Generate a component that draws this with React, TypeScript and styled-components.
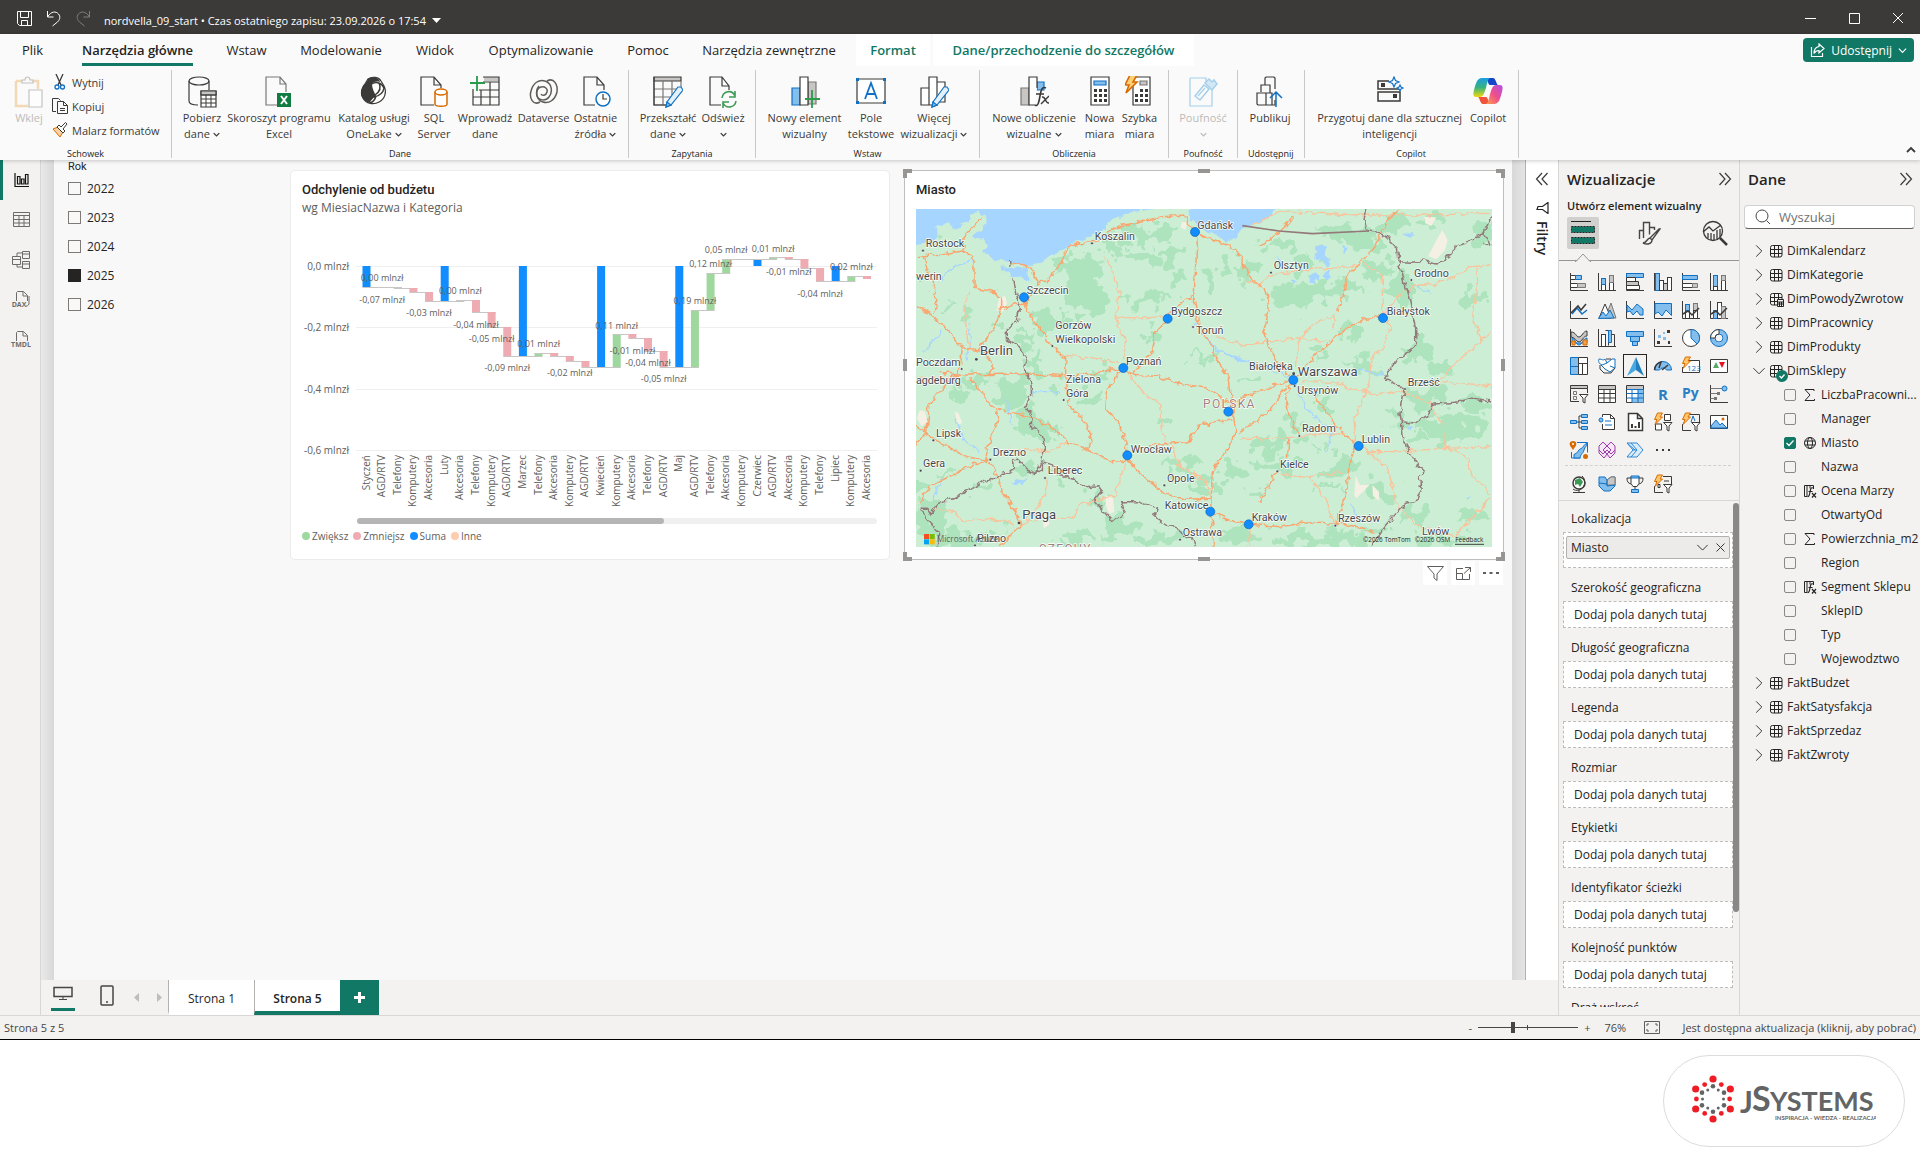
import React from "react";
import styled, { createGlobalStyle, css } from "styled-components";

/* ---------- theme values ---------- */
const ink = "#252423";
const dark = "#3b3a39";
const green = "#117865";
const blue = "#1071c4";
const sky = "#83beec";
const grey = "#c8c6c4";
const line = "#d9d7d5";
const pane = "#f3f2f1";
const orange = "#d86b00";

const Global = createGlobalStyle`
  *, *::before, *::after { box-sizing: border-box; }
  html, body { margin: 0; padding: 0; background: #fff; }
  body, button, input { font-family: "Open Sans", "Noto Sans", sans-serif; font-size: 12px; color: ${ink}; }
  button { background: none; border: 0; padding: 0; margin: 0; cursor: pointer; }
  svg { display: block; flex: none; }
`;

const Shell = styled.div`
  display: flex;
  flex-direction: column;
  height: 100vh;
  min-height: 720px;
  overflow: hidden;
`;

/* ---------- title bar ---------- */
const TitleBar = styled.header`
  display: flex;
  align-items: center;
  flex: none;
  height: 34px;
  padding: 2px 14px 0 16px;
  gap: 13px;
  background: #3b3a38;
  color: #fff;
`;
const TitleButton = styled.button<{ $dim?: boolean }>`
  display: flex;
  color: #fff;
  opacity: ${(p) => (p.$dim ? 0.35 : 1)};
`;
const FileName = styled.button`
  display: flex;
  align-items: center;
  gap: 6px;
  margin-right: auto;
  color: #fff;
  font-size: 11px;
  line-height: 16px;
  white-space: nowrap;
  padding-top: 5px;
`;
const WindowControls = styled.div`
  display: flex;
  gap: 28px;
`;

/* ---------- ribbon ---------- */
const Ribbon = styled.section`
  position: relative;
  z-index: 2;
  flex: none;
  background: #fafafa;
  box-shadow: 0 1px 4px rgba(0, 0, 0, 0.2);
`;
const TabRow = styled.nav`
  display: flex;
  align-items: stretch;
  height: 32px;
  padding-right: 6px;
`;
const RibbonTab = styled.button<{ $w: number; $active?: boolean; $context?: boolean }>`
  display: flex;
  align-items: center;
  justify-content: center;
  width: ${(p) => p.$w}px;
  font-size: 13px;
  white-space: nowrap;
  font-weight: ${(p) => (p.$active || p.$context ? 600 : 400)};
  color: ${(p) => (p.$context ? green : ink)};
  background: ${(p) => (p.$context ? "#fff" : "transparent")};
  margin-left: ${(p) => (p.$context ? 3 : 0)}px;
  & > span {
    display: flex;
    align-items: center;
    height: 31px;
    border-bottom: 3px solid ${(p) => (p.$active ? green : "transparent")};
    border-top: 3px solid transparent;
  }
`;
const ShareButton = styled.button`
  display: flex;
  align-items: center;
  gap: 6px;
  margin: 4px 0 4px auto;
  height: 24px;
  padding: 0 7px;
  border-radius: 4px;
  background: ${green};
  color: #fff;
  font-size: 12px;
`;
const Groups = styled.div`
  display: flex;
  height: 94px;
  padding-top: 4px;
`;
const Group = styled.section`
  display: flex;
  flex-direction: column;
  height: 88px;
  padding: 0 10px;
  border-right: 1px solid #c8c8c8;
`;
const GroupItems = styled.div`
  display: flex;
  flex: 1;
  gap: 4px;
  padding-top: 6px;
`;
const GroupLabel = styled.h2`
  margin: 0;
  font-size: 9px;
  font-weight: 400;
  line-height: 9px;
  text-align: center;
  white-space: nowrap;
  display: flex;
  justify-content: center;
`;
const BigButton = styled.button<{ $w: number; $off?: boolean }>`
  display: flex;
  flex-direction: column;
  align-items: center;
  width: ${(p) => p.$w}px;
  font-size: 11px;
  line-height: 16px;
  color: ${(p) => (p.$off ? "#bdbbb9" : dark)};
  & > svg { margin-bottom: 2px; }
`;
const ButtonLine = styled.span`
  display: flex;
  align-items: center;
  justify-content: center;
  gap: 3px;
  min-height: 16px;
  white-space: nowrap;
`;
const SmallButtons = styled.div`
  display: flex;
  flex-direction: column;
  gap: 2px;
  margin-top: -5px;
`;
const SmallButton = styled.button`
  display: flex;
  align-items: center;
  gap: 4px;
  height: 22px;
  width: 109px;
  font-size: 11px;
  white-space: nowrap;
  color: ${dark};
`;
const CollapseButton = styled.button`
  align-self: flex-end;
  margin: 0 4px 5px auto;
`;

/* ---------- main area ---------- */
const Main = styled.div`
  display: flex;
  flex: 1;
  min-height: 0;
`;
const Rail = styled.nav`
  display: flex;
  flex-direction: column;
  flex: none;
  width: 41px;
  background: ${pane};
  border-right: 1px solid ${line};
`;
const RailButton = styled.button<{ $active?: boolean }>`
  display: flex;
  align-items: center;
  justify-content: center;
  height: 40px;
  padding-right: 2px;
  border-left: 3px solid ${(p) => (p.$active ? green : "transparent")};
`;
const Center = styled.div`
  display: flex;
  flex-direction: column;
  flex: 1;
  min-width: 0;
`;
const CenterTop = styled.div`
  display: flex;
  flex: 1;
  min-height: 0;
`;
const Canvas = styled.main`
  flex: 1;
  min-width: 0;
  padding: 0 13px;
  background: linear-gradient(90deg, #e9e9e9, #d8d8d8 13px, #d8d8d8 calc(100% - 13px), #e4e4e4);
  border-right: 1px solid #b3b0ad;
`;
const Page = styled.div`
  display: grid;
  grid-template-columns: 208px minmax(0, 1fr) minmax(0, 1fr);
  column-gap: 14px;
  align-items: start;
  height: 100%;
  padding: 0 8px 0 14px;
  background: #f8f8f8;
  overflow: hidden;
`;
const Slicer = styled.fieldset`
  display: flex;
  flex-direction: column;
  border: 0;
  margin: 0;
  padding: 0;
`;
const SlicerTitle = styled.legend`
  padding: 0;
  font-family: Roboto, sans-serif;
  font-size: 11px;
  line-height: 14px;
`;
const SlicerItem = styled.label`
  display: flex;
  align-items: center;
  gap: 6px;
  height: 29px;
  font-size: 12px;
`;
const SlicerBox = styled.input`
  appearance: none;
  width: 13px;
  height: 13px;
  margin: 0;
  border: 1px solid #7d7a78;
  &:checked { background: ${ink}; border-color: ${ink}; }
`;
const Card = styled.article<{ $selected?: boolean }>`
  position: relative;
  height: 390px;
  margin-top: 10px;
  padding: 11px;
  background: #fff;
  border: 1px solid ${(p) => (p.$selected ? "#c0bebc" : "#ececec")};
  border-radius: ${(p) => (p.$selected ? 0 : 5)}px;
`;
const CardTitle = styled.h3`
  margin: 0;
  font-family: Roboto, sans-serif;
  font-size: 13px;
  font-weight: 500;
  line-height: 15px;
`;
const CardSub = styled.p`
  margin: 0;
  font-size: 12px;
  line-height: 22px;
  color: #605e5c;
`;
const ChartSvg = styled.svg`
  width: 100%;
  height: auto;
  font-family: "Open Sans", "Noto Sans", sans-serif;
`;
const ScrollTrack = styled.div`
  height: 6px;
  margin: 0 1px 5px 55px;
  border-radius: 3px;
  background: #f0f0f0;
`;
const ScrollThumb = styled.div`
  width: 59%;
  height: 6px;
  border-radius: 3px;
  background: #b5b5b5;
`;
const Legend = styled.ul`
  display: flex;
  gap: 5px;
  margin: 0;
  padding: 0;
  list-style: none;
  font-size: 10px;
  line-height: 14px;
  color: #605e5c;
`;
const LegendItem = styled.li<{ $color: string }>`
  display: flex;
  align-items: center;
  gap: 2px;
  &::before {
    content: "";
    width: 8px;
    height: 8px;
    border-radius: 50%;
    background: ${(p) => p.$color};
  }
`;
const MapSvg = styled.svg`
  width: 100%;
  height: auto;
  margin-top: 12px;
  font-family: Roboto, sans-serif;
`;
const Handle = styled.i<{ $v: "top" | "mid" | "bottom"; $h: "left" | "mid" | "right" }>`
  position: absolute;
  ${(p) => {
    const corner = p.$v !== "mid" && p.$h !== "mid";
    const w = corner ? 9 : p.$h === "mid" ? 12 : 4;
    const h = corner ? 9 : p.$v === "mid" ? 12 : 4;
    return css`
      width: ${w}px;
      height: ${h}px;
      ${p.$v === "top" ? "top: -2px;" : p.$v === "bottom" ? "bottom: -2px;" : "top: calc(50% - 6px);"}
      ${p.$h === "left" ? "left: -2px;" : p.$h === "right" ? "right: -2px;" : "left: calc(50% - 6px);"}
      ${corner
        ? `border-${p.$v}: 4px solid #979593; border-${p.$h}: 4px solid #979593;`
        : "background: #979593;"}
    `;
  }}
`;
const VisualTools = styled.div`
  position: absolute;
  top: 390px;
  right: 0;
  display: flex;
  gap: 4px;
`;
const ToolButton = styled.button`
  display: flex;
  align-items: center;
  justify-content: center;
  width: 24px;
  height: 24px;
  background: #fff;
`;

/* ---------- filters strip ---------- */
const Filters = styled.aside`
  display: flex;
  flex-direction: column;
  align-items: center;
  width: 32px;
  padding-top: 12px;
  background: #fff;
`;
const FilterLabel = styled.button`
  display: flex;
  align-items: center;
  gap: 7px;
  margin-top: 16px;
  writing-mode: vertical-rl;
  font-size: 14px;
  font-weight: 600;
  line-height: 20px;
`;

/* ---------- page tabs ---------- */
const PageBar = styled.div`
  display: flex;
  align-items: stretch;
  flex: none;
  height: 35px;
  background: ${pane};
`;
const ViewButton = styled.button<{ $active?: boolean }>`
  display: flex;
  flex-direction: column;
  align-items: center;
  justify-content: space-between;
  width: 24px;
  margin: 5px 10px 4px 10px;
  border-bottom: 3px solid ${(p) => (p.$active ? green : "transparent")};
`;
const PageArrows = styled.div`
  display: flex;
  align-items: center;
  gap: 16px;
  margin: 0 6px 0 5px;
`;
const PageTab = styled.button<{ $active?: boolean }>`
  width: 86px;
  padding-top: 5px;
  background: #fff;
  font-weight: ${(p) => (p.$active ? 600 : 400)};
  border-left: 1px solid #b3b0ad;
  border-bottom: 4px solid ${(p) => (p.$active ? green : "#fff")};
`;
const AddPage = styled.button`
  display: flex;
  align-items: center;
  justify-content: center;
  width: 39px;
  background: ${green};
`;

/* ---------- side panes ---------- */
const Pane = styled.aside<{ $w: number }>`
  display: flex;
  flex-direction: column;
  flex: none;
  width: ${(p) => p.$w}px;
  min-height: 0;
  background: ${pane};
  border-left: 1px solid ${line};
`;
const PaneHead = styled.div`
  display: flex;
  align-items: center;
  justify-content: space-between;
  height: 36px;
  padding: 1px 7px 0 8px;
`;
const PaneTitle = styled.h2`
  margin: 0;
  font-size: 15px;
  font-weight: 600;
`;
const SubTitle = styled.h3`
  margin: 0;
  padding: 0 8px;
  font-size: 11px;
  font-weight: 600;
  line-height: 20px;
`;
const ModeRow = styled.div`
  display: flex;
  justify-content: space-between;
  height: 45px;
  padding: 1px 8px 0;
  border-bottom: 1px solid #979593;
`;
const ModeButton = styled.button<{ $active?: boolean }>`
  position: relative;
  display: flex;
  align-items: center;
  justify-content: center;
  width: 32px;
  height: 32px;
  border-radius: 2px;
  background: ${(p) => (p.$active ? "#d2d0ce" : "transparent")};
`;
const Caret = styled.svg`
  position: absolute;
  top: 36px;
  left: 8px;
`;
const VisualGrid = styled.div<{ $top: number }>`
  display: grid;
  grid-template-columns: repeat(6, 28px);
  grid-auto-rows: 28px;
  padding: ${(p) => p.$top}px 0 1px 6px;
`;
const VisualButton = styled.button<{ $active?: boolean }>`
  display: flex;
  align-items: center;
  justify-content: center;
  margin: 2px;
  border: 1px solid ${(p) => (p.$active ? ink : "transparent")};
`;
const Dashed = styled.hr`
  width: calc(100% - 14px);
  margin: 0 6px;
  border: 0;
  border-top: 1px dashed #d2d0ce;
`;
const Divider = styled.div`
  flex: none;
  height: 1px;
  margin-top: 1px;
  background: ${line};
`;
const WellScroll = styled.div`
  display: flex;
  flex: 1;
  min-height: 0;
  margin-bottom: 8px;
  overflow: hidden;
`;
const WellList = styled.div`
  flex: 1;
  min-width: 0;
  padding: 8px 0 0 4px;
`;
const WellBar = styled.div`
  width: 6px;
  height: calc(100% - 97px);
  margin-top: 2px;
  border-radius: 3px;
  background: #8a8886;
`;
const Well = styled.section`
  margin-bottom: 10px;
`;
const WellLabel = styled.h4`
  margin: 0 0 3px;
  padding-left: 8px;
  font-size: 12px;
  font-weight: 400;
  line-height: 20px;
`;
const WellBox = styled.div<{ $filled?: boolean }>`
  height: ${(p) => (p.$filled ? 36 : 27)}px;
  padding: ${(p) => (p.$filled ? "3px 2px" : "0 10px")};
  border: 1px dashed #bebbb8;
  background: #fff;
  line-height: 26px;
`;
const FieldPill = styled.div`
  display: flex;
  align-items: center;
  gap: 7px;
  height: 23px;
  padding: 0 4px;
  border: 1px solid #b3b0ad;
  border-radius: 2px;
  background: #edebe9;
  line-height: 20px;
  & > span { flex: 1; }
`;
const SearchBox = styled.label`
  display: flex;
  align-items: center;
  gap: 8px;
  height: 24px;
  margin: 9px 5px 10px 4px;
  padding: 0 10px;
  background: #fff;
  border: 1px solid #d1d1d1;
  border-bottom-color: #616161;
  border-radius: 4px;
`;
const SearchInput = styled.input`
  width: 100%;
  min-width: 0;
  border: 0;
  padding: 0;
  outline: 0;
  background: none;
  font-size: 13px;
  &::placeholder { color: #707070; opacity: 1; }
`;
const Tree = styled.ul`
  margin: 0;
  padding: 0;
  list-style: none;
`;
const TableRow = styled.button`
  display: flex;
  align-items: center;
  gap: 4px;
  width: 100%;
  height: 24px;
  padding-left: 12px;
  line-height: 24px;
`;
const FieldRow = styled.label`
  display: flex;
  align-items: center;
  height: 24px;
  padding-left: 44px;
  line-height: 24px;
  white-space: nowrap;
`;
const FieldCheck = styled.input`
  appearance: none;
  width: 12px;
  height: 12px;
  margin: 0 7px 0 0;
  border: 1px solid #8a8886;
  border-radius: 2px;
  flex: none;
  &:checked {
    border-color: ${green};
    background: ${green};
  }
`;
const CheckWrap = styled.span`
  display: grid;
  & > * { grid-area: 1 / 1; align-self: center; }
  & > svg { margin-left: 2px; pointer-events: none; }
`;
const FieldIcon = styled.span`
  display: flex;
  width: 18px;
`;

/* ---------- status bar ---------- */
const StatusBar = styled.footer`
  display: flex;
  align-items: center;
  flex: none;
  height: 25px;
  padding: 0 4px;
  background: ${pane};
  border-top: 1px solid ${line};
  border-bottom: 1px solid #000;
  color: #484644;
  font-size: 11px;
`;
const ZoomGroup = styled.div`
  display: flex;
  align-items: center;
  gap: 6px;
  margin-left: auto;
  margin-right: 22px;
`;
const ZoomSlider = styled.input`
  appearance: none;
  width: 100px;
  height: 12px;
  margin: 0;
  background:
    linear-gradient(#484644, #484644) 49px 50% / 1px 5px no-repeat,
    linear-gradient(#484644, #484644) 0 50% / 100% 1px no-repeat;
  &::-webkit-slider-thumb {
    appearance: none;
    width: 4px;
    height: 11px;
    background: #484644;
  }
`;
const ZoomValue = styled.span`
  width: 34px;
  margin-left: 8px;
`;

/* ---------- brand strip ---------- */
const BrandStrip = styled.div`
  display: flex;
  justify-content: flex-end;
  align-items: center;
  flex: none;
  height: 122px;
  padding-right: 15px;
  background: #fff;
`;
const BrandPill = styled.div`
  display: flex;
  align-items: center;
  justify-content: center;
  width: 242px;
  height: 92px;
  border: 1px solid #dcdcdc;
  border-radius: 46px;
`;

/* ---------- small glyphs ---------- */
const Chevron = ({ dir = "down", size = 7, color = dark, w = 1.3 }: { dir?: string; size?: number; color?: string; w?: number }) => {
  const d = { down: "M1 3l4 4 4-4", up: "M1 7l4-4 4 4", right: "M3 1l4 4-4 4" }[dir];
  return (
    <svg width={size} height={size} viewBox="0 0 10 10" fill="none" stroke={color} strokeWidth={(w * 10) / size}>
      <path d={d} />
    </svg>
  );
};
const DoubleChevron = ({ left }: { left?: boolean }) => (
  <svg width="14" height="14" viewBox="0 0 14 14" fill="none" stroke={dark} strokeWidth="1.2">
    <path d={left ? "M7 1L1.5 7 7 13M12.500 1L7 7l5.500 6" : "M1.500 1L7 7l-5.500 6M7 1l5.500 6L7 13"} />
  </svg>
);

/* ---------- ribbon icons, 30 x 32 ---------- */
const R = ({ children }: { children: React.ReactNode }) => (
  <svg width="30" height="32" viewBox="0 0 30 32" fill="none" stroke={dark} strokeWidth="1.2">
    {children}
  </svg>
);
const pencil = (
  <g>
    <path d="M28 11l2 3-12 15-5 2 1-5 11-15z" fill="#e3f0fa" stroke={blue} />
    <path d="M13 31l1-5 4 3z" fill={sky} stroke={blue} />
  </g>
);
const bolt = "M8 0h7l-4 7h4L4 18l3-8H3z";
const I: Record<string, React.ReactNode> = {
  paste: (
    <R>
      <g opacity=".6">
        <path d="M2 5h22v8M2 5v25h12" stroke="#f0c28a" strokeWidth="2.500" />
        <path d="M8 7V4h3c0-4 5-4 5 0h3v3z" fill="#fafafa" stroke="#a19f9d" />
        <path d="M15 14h13v17H15z" fill="#fff" stroke="#a19f9d" />
      </g>
    </R>
  ),
  getData: (
    <R>
      <ellipse cx="12" cy="5" rx="10" ry="4" />
      <path d="M2 5v20c0 3 5 4 9 4M22 5v9" />
      <path d="M14 15h15v16H14z" fill="#fff" />
      <path d="M14 15h15v4H14z" fill={grey} />
      <path d="M14 19h15M14 23h15M14 27h15M19 19v12M24 19v12" strokeWidth="1" />
    </R>
  ),
  excel: (
    <R>
      <path d="M14 29H2V1h14l6 7v8M16 1v7h6" stroke="#7a7876" />
      <path d="M13 17h14v14H13z" fill="#107c41" stroke="none" />
      <path d="M17 20l6 8M23 20l-6 8" stroke="#fff" strokeWidth="2" />
    </R>
  ),
  onelake: (
    <R>
      <path d="M9 3c4-3 11-2 13 2l3 5c3 6 1 13-5 16-5 3-13 2-16-4-3-5-1-11 2-14z" fill="#fff" />
      <path d="M9 3c4-3 11-2 12 3-4-1-7 0-8 2 0 4 2 8 4 12-4 3-6 5-6 7C3 25 0 18 3 12c2-4 4-4 6-9z" fill={dark} stroke="none" />
      <path d="M13 8c4-3 10-1 12 4-1 6-5 8-10 9M17 20c-1 4-3 6-6 7M20 7c3 6-1 10-4 12" stroke={dark} strokeWidth="1.500" />
    </R>
  ),
  sql: (
    <R>
      <path d="M15 29H2V1h13l7 8v3M15 1v8h7" />
      <path d="M16 16v12c0 3 12 3 12 0V16" fill="#fff" stroke={orange} strokeWidth="1.500" />
      <ellipse cx="22" cy="16" rx="6" ry="3" fill="#fff" stroke={orange} strokeWidth="1.500" />
    </R>
  ),
  enter: (
    <R>
      <path d="M14 1h15v4H14z" fill={grey} stroke="none" />
      <path d="M13 1h16v28H3V13M13 6h16M9 14h20M3 21h26M11 14v15M20 6v23" />
      <path d="M7 0v15M0 7h15" stroke="#2b9a4b" strokeWidth="1.800" />
    </R>
  ),
  dataverse: (
    <R>
      <path d="M11 26C4 30 0 22 2 15 4 7 10 3 16 5c7 2 8 11 4 16-3 4-10 4-12-1-1-4 0-8 4-9 4-1 7 2 6 5-1 4-5 4-6 2" stroke="#605e5c" strokeWidth="1.500" />
      <path d="M18 5c7-4 11 4 10 11-2 8-8 12-14 10-7-2-8-11-4-16" stroke="#605e5c" strokeWidth="1.500" />
    </R>
  ),
  recent: (
    <R>
      <path d="M14 29H3V1h13l7 8v5M16 1v8h7" />
      <circle cx="22" cy="23" r="7" fill="#fff" stroke={blue} strokeWidth="1.500" />
      <path d="M22 18v5h4" />
    </R>
  ),
  transform: (
    <R>
      <path d="M1 1h27v4H1z" fill={grey} />
      <path d="M1 5v24h16M28 5v8M1 13h24M1 21h17M10 5v24M19 5v14" stroke="#7a7876" />
      <path d="M1 1v28h12" />
      {pencil}
    </R>
  ),
  refresh: (
    <R>
      <path d="M13 29H2V1h12l7 9v4M14 1v9h7" />
      <path d="M14 22c1-7 10-9 13-2M27 15v6h-6M28 25c-1 7-10 8-13 2M15 32v-6h6" stroke="#3d9a55" strokeWidth="1.600" />
    </R>
  ),
  newVisual: (
    <R>
      <path d="M2 12h8v17H2z" fill={sky} stroke={blue} />
      <path d="M18 6h8v22h-8z" fill={grey} stroke="#7a7876" />
      <path d="M10 1h8v28h-8z" fill="#fff" />
      <path d="M22 14v18M15 23h15" stroke="#2b9a4b" strokeWidth="1.800" />
    </R>
  ),
  textBox: (
    <R>
      <path d="M1 3h28v24H1z" fill="#fff" />
      <path d="M9 23L15 7l6 16M11 18h8" stroke={blue} strokeWidth="1.800" />
      <path d="M0 2h3v3H0zM27 2h3v3h-3zM0 25h3v3H0zM27 25h3v3h-3z" fill={blue} stroke="none" />
    </R>
  ),
  moreVisuals: (
    <R>
      <path d="M2 12h8v17H2zM18 6h8v20h-8zM10 1h8v28h-8z" fill="#fff" />
      {pencil}
    </R>
  ),
  calc: (
    <R>
      <path d="M2 12h8v17H2z" fill={grey} stroke="#7a7876" />
      <path d="M18 6h7v8h-7z" fill={sky} stroke={blue} />
      <path d="M18 12V1h-8v28h6" fill="#fff" />
      <path d="M27 12c-4-2-5 2-6 8s-2 11-5 9M17 18h8" strokeWidth="1.600" />
      <path d="M23 21c4-1 3 7 7 6M30 20l-8 8" strokeWidth="1.400" />
    </R>
  ),
  measure: (
    <R>
      <path d="M6 1h18v28H6z" fill="#fff" />
      <path d="M9 5h12v4H9z" fill={sky} stroke={blue} />
      <path d="M9 13h3v3H9zM14 13h3v3h-3zM19 13h3v3h-3zM9 18h3v3H9zM14 18h3v3h-3zM19 18h3v3h-3zM9 23h3v3H9zM14 23h3v3h-3zM19 23h3v3h-3z" fill={dark} stroke="none" />
    </R>
  ),
  quick: (
    <R>
      <path d="M8 1h17v28H8z" fill="#fff" />
      <path d="M15 5h7v4h-7z" fill={grey} stroke="#7a7876" />
      <path d="M15 13h3v3h-3zM20 13h3v3h-3zM10 18h3v3h-3zM15 18h3v3h-3zM20 18h3v3h-3zM10 23h3v3h-3zM15 23h3v3h-3zM20 23h3v3h-3z" fill={dark} stroke="none" />
      <g transform="translate(-3 -1)">
        <path d={bolt} fill="#ffd078" stroke={orange} strokeWidth="1.600" />
      </g>
    </R>
  ),
  sensitivity: (
    <R>
      <g stroke="#a5cfea">
        <path d="M2 2h16v6M24 14v16H2V2" />
        <path d="M7 20l9-11 5 4-9 11z" strokeWidth="1.500" />
        <path d="M10 20l7-8" />
        <path d="M17 7l4-4 3 3 2-2 3 4-5 6z" fill="#d3e8f5" strokeWidth="1.500" />
      </g>
    </R>
  ),
  publish: (
    <R>
      <path d="M2 17h9v12H3l-1-1zM6 16V9h9v8M10 9V2l1-1h8l1 1v11M11 17h6v12h-6M20 24v5h-7" />
      <path d="M21 31V16M15 22l6-6 6 6" stroke={blue} strokeWidth="1.500" />
    </R>
  ),
  prep: (
    <R>
      <path d="M14 5H3v8h22v-2M3 16h22v9H3z" strokeWidth="1.500" />
      <path d="M6 7h4v4H6zM18 18h4v4h-4z" fill={dark} stroke="none" />
      <path d="M19 1l1.500 3.500L24 6l-3.500 1.500L19 11l-1.500-3.500L14 6l3.500-1.500zM25 9l1 2 2 1-2 1-1 2-1-2-2-1 2-1z" fill="#fff" stroke={blue} />
    </R>
  ),
  copilot: (
    <svg width="30" height="32" viewBox="0 0 30 32">
      <defs>
        <linearGradient id="cpA" x1="0" y1="0" x2="0" y2="1">
          <stop offset="0" stopColor="#1b9de2" />
          <stop offset=".5" stopColor="#36b37e" />
          <stop offset="1" stopColor="#f5d90a" />
        </linearGradient>
        <linearGradient id="cpB" x1="1" y1="0" x2="0" y2="1">
          <stop offset="0" stopColor="#b050e8" />
          <stop offset=".5" stopColor="#ee4e8b" />
          <stop offset="1" stopColor="#ffa14a" />
        </linearGradient>
      </defs>
      <path d="M14 2h6c3 0 3 6 5 7h-8c-2 0-3-7-3-7z" fill="#1447c8" />
      <path d="M16 28h-6c-3 0-3-6-5-7h8c2 0 3 7 3 7z" fill="#f0553c" />
      <path d="M9 2h8c-2 1-3 5-4 10-2 6-3 9-6 9H3c-3 0-3-3-2-7C3 7 4 2 9 2z" fill="url(#cpA)" />
      <path d="M21 28h-8c2-1 3-5 4-10 2-6 3-9 6-9h4c3 0 3 3 2 7-2 7-3 12-8 12z" fill="url(#cpB)" />
    </svg>
  ),
};

/* ---------- visualization icons, 18 x 18 ---------- */
const axis = <path d="M.5 0v17.500H18" stroke={dark} />;
const miniBolt = <path d="M3.500 0h5L6 4h2.500L1 11.500l2-5H.5z" fill="#ffc66b" stroke={orange} />;
const miniFunnel = <path d="M9.500 9.500h8.500l-3 3.500v5l-2-1v-4z" fill="#fff" stroke={dark} />;
const barV = (x: number, y: number, h: number, f: string, s = dark) => (
  <rect x={x + 0.5} y={y + 0.5} width="4" height={h} fill={f} stroke={s} />
);
const visuals: [string, React.ReactNode][] = [
  ["Skumulowany wykres słupkowy", <>{axis}<path d="M.5 2.500h5v4h-5zM.5 10.500h7v4h-7z" fill="#fff" stroke={dark} /><path d="M5.500 2.500h6v4h-6z" fill={sky} stroke={blue} /><path d="M7.500 10.500h8v4h-8z" fill={grey} stroke="#7a7876" /></>],
  ["Skumulowany wykres kolumnowy", <>{axis}{barV(3, 11, 6, "#fff")}{barV(3, 5, 6, sky, blue)}{barV(11, 9, 8, "#fff")}{barV(11, 2, 7, grey, "#7a7876")}</>],
  ["Grupowany wykres słupkowy", <>{axis}<path d="M.5 .5h17v4H.5z" fill={sky} stroke={blue} /><path d="M.5 4.500h9v4h-9zM.5 12.500h13v4H.5z" fill="#fff" stroke={dark} /><path d="M.5 8.500h12v4H.5z" fill={grey} stroke={dark} /></>],
  ["Grupowany wykres kolumnowy", <>{axis}{barV(1, 0, 17, sky, blue)}{barV(5, 7, 10, "#fff")}{barV(9, 10, 7, grey)}{barV(13, 4, 13, "#fff")}</>],
  ["100% skumulowany wykres słupkowy", <>{axis}<path d="M.5 2.500h15v4H.5z" fill={sky} stroke={blue} /><path d="M.5 10.500h10v4H.5z" fill="#fff" stroke={dark} /><path d="M10.500 10.500h5v4h-5z" fill={grey} stroke="#7a7876" /></>],
  ["100% skumulowany wykres kolumnowy", <>{axis}{barV(3, 2, 11, sky, blue)}{barV(3, 13, 4, "#fff")}{barV(11, 7, 10, "#fff")}{barV(11, 2, 5, grey, "#7a7876")}</>],
  ["Wykres liniowy", <>{axis}<path d="M2 13l5-6 5 6 5-4" stroke={blue} strokeWidth="1.500" /><path d="M1 12l7-7 3 4 5-6" stroke={dark} strokeWidth="1.500" /></>],
  ["Wykres warstwowy", <><path d="M7 17L13 2l5 15z" fill={grey} stroke="#7a7876" /><path d="M1 17l6-14 6 14z" fill="#fff" stroke={dark} /><path d="M.5 17.500L5 11l3 4 4-6 4 8z" fill={sky} stroke={blue} /></>],
  ["Skumulowany wykres warstwowy", <>{axis}<path d="M1 4l5 5 5-6 6 5v6H14l-3-4-4 4-3-4-3 1z" fill={sky} stroke={blue} /></>],
  ["100% skumulowany warstwowy", <>{axis}<path d="M1 2.500h16.500v12L12 9l-4 6-4-4-3 2z" fill={sky} stroke={blue} /></>],
  ["Liniowy i skumulowany kolumnowy", <>{axis}{barV(3, 9, 8, "#fff")}{barV(3, 3, 6, sky, blue)}{barV(11, 2, 7, grey, "#7a7876")}{barV(11, 9, 8, "#fff")}<path d="M1 13l5-3 4 4 7-7" stroke={dark} strokeWidth="1.500" /></>],
  ["Liniowy i grupowany kolumnowy", <>{axis}{barV(3, 9, 8, sky, blue)}{barV(7, 1, 16, "#fff")}{barV(11, 5, 12, grey, "#7a7876")}<path d="M1 13l5-3 4 4 7-7" stroke={dark} strokeWidth="1.500" /></>],
  ["Wykres wstążkowy", <>{axis}<path d="M1 3c5 0 5 5 8 5s4-6 8-6v5c-4 0-5 6-8 6S5 8 1 8z" fill={grey} stroke={dark} /><path d="M2 9c3 0 4 7 7 7s4-7 8-7v5H2z" fill={sky} stroke={blue} /><path d="M2 12h3v4H2zM13 11h4v5h-4z" fill="#f5a04a" stroke={orange} /></>],
  ["Wykres kaskadowy", <>{axis}{barV(3, 5, 12, "#fff")}<path d="M7.500 1.500h3v15" stroke={dark} /><path d="M10.500 1.500h3v12h-3z" fill={sky} stroke={blue} /><path d="M13.500 5.500h3v12" stroke={dark} /></>],
  ["Lejek", <><path d="M.5 2.500h17v5H.5zM4.500 7.500h9v5h-9zM6.500 12.500h5v4h-5z" fill={sky} stroke={blue} /></>],
  ["Wykres punktowy", <>{axis}<path d="M3 12h3v3H3zM13 1h3v3h-3zM14 12h2v3h-2z" fill={dark} /><path d="M4 6h3v3H4zM9 8h3v3H9zM9 3h2v2H9z" fill={sky} /></>],
  ["Wykres kołowy", <><circle cx="9" cy="9" r="8.500" fill="#fff" stroke={dark} /><path d="M9 .5a8.500 8.500 0 016 14.500L9 9z" fill={sky} stroke={blue} /></>],
  ["Wykres pierścieniowy", <><circle cx="9" cy="9" r="6.500" stroke={sky} strokeWidth="4" /><circle cx="9" cy="9" r="8.500" stroke={blue} /><circle cx="9" cy="9" r="4" stroke={blue} /><path d="M.5 9A8.500 8.500 0 019 .5v4.500a4 4 0 00-4 4z" fill="#fff" stroke={dark} /></>],
  ["Mapa drzewa", <><path d="M.5 .5h8v9h-8zM.5 9.500h8v8h-8z" fill={sky} stroke={blue} /><path d="M8.500 .5h9v6h-9zM8.500 6.500h4v11h-4zM12.500 6.500h5v11h-5z" fill="#fff" stroke={dark} /></>],
  ["Mapa", <><path d="M1 2c3 0 4 2 6 0l2 4-5 2C1 7 0 4 1 2zM9 6l5-4h3v9l-5 4-5-3-4-4M12 9l5 2" fill="#fff" stroke={blue} /><path d="M8 2h5M2 8v4l4 4h7l4-5" stroke={dark} /></>],
  ["Mapa platformy Azure", <><path d="M10 0L1 19l9-6z" fill="#47a9e0" /><path d="M10 0l8 19-8-6z" fill="#1f7fbf" /></>],
  ["Miernik", <><path d="M.5 13a8.500 8.500 0 0117 0h-5a4 4 0 00-7 0z" fill={sky} stroke={blue} /><path d="M.5 13C1 8 3 6 7 5l-2 6M8 13l6-5" stroke={dark} strokeWidth="1.500" /></>],
  ["Karta", <><path d="M4 3.500h13.500v12H.5V10" fill="#fff" stroke={dark} /><text x="5" y="14" fontSize="8" fill={blue}>123</text>{miniBolt}</>],
  ["Kluczowy wskaźnik wydajności", <><path d="M.5 2.500h17v13H.5z" fill="#fff" stroke={dark} /><path d="M3 11l3-6 3 6z" fill="#55a868" /><path d="M9 5h6l-3 6z" fill="#e81123" /></>],
  ["Fragmentator", <><path d="M.5 .5h17v3H.5z" fill={grey} stroke={dark} /><path d="M.5 3.500v13H9M17.500 3.500V8" stroke={dark} /><path d="M3.500 6.500h3v3h-3zM3.500 11.500h3v3h-3z" stroke="#7a7876" />{miniFunnel}</>],
  ["Tabela", <><path d="M.5 .5h17v17H.5z" fill="#fff" stroke={dark} /><path d="M1 1h16v3H1z" fill={grey} /><path d="M.5 4.500h17M.5 8.500h17M.5 13h17M6 4.500v13M12 4.500v13" stroke={dark} /></>],
  ["Macierz", <><path d="M.5 .5h17v17H.5z" fill="#fff" stroke={dark} /><path d="M1 1h16v3H1z" fill={grey} /><path d="M12 4.500h5.500v13H6V13h6z" fill={sky} /><path d="M.5 4.500h17M.5 8.500h17M.5 13h17M6 4.500v13M12 4.500v13" stroke={blue} /></>],
  ["Wizualizacja skryptu języka R", <text x="4" y="15" fontSize="15" fontWeight="700" fill="#2a7fc4">R</text>],
  ["Wizualizacja języka Python", <text x="0" y="13" fontSize="14" fontWeight="700" fill="#2a7fc4">Py</text>],
  ["Kluczowe elementy wpływające", <>{axis}<path d="M.5 3.500h13M.5 8.500h8M.5 13.500h5" stroke="#7a7876" /><path d="M7 7h3v3H7zM4 12h3v3H4z" fill="#7a7876" /><circle cx="14.500" cy="3.500" r="2.500" fill={sky} stroke={blue} /></>],
  ["Drzewo dekompozycji", <><path d="M6 9h5M9 3v12M9 3h3M9 15h3" stroke={dark} /><path d="M.5 7.500h6v3h-6zM11.500 1.500h6v3h-6zM11.500 7.500h6v3h-6zM11.500 13.500h6v3h-6z" fill={sky} stroke={blue} /></>],
  ["Pytania i odpowiedzi", <><path d="M4.500 4V1.500h8l4 4v11h-12V11" fill="#fff" stroke={dark} /><path d="M12.500 1.500v4h4" stroke={dark} /><circle cx="3" cy="7" r="2" fill={sky} stroke={blue} /><path d="M7 8h6M7 12h7" stroke={blue} /></>],
  ["Narracja", <><path d="M2.500 .5h9l5 5v12h-14zM11.500 .5v5h5" fill="#fff" stroke={dark} strokeWidth="1.500" /><path d="M5 11h2v4H5zM8.500 13h2v2h-2zM12 9h2v6h-2z" fill={dark} /></>],
  ["Fragmentator przycisków", <><path d="M10.500 1.500h6v6h-6zM1.500 11v6h6v-6z" fill="#fff" stroke={dark} />{miniBolt}{miniFunnel}</>],
  ["Fragmentator tekstowy", <><path d="M7 1.500h10.500V9M.5 11v6.500H9" stroke={dark} /><path d="M9 9l2-6 2 5" stroke={blue} />{miniBolt}{miniFunnel}</>],
  ["Obraz", <><path d="M.5 2.500h17v13H.5z" fill="#fff" stroke={dark} /><path d="M1 13l5-6 4 5 2-2 5 5H1z" fill={sky} stroke={blue} /><circle cx="13" cy="6" r="1.500" fill={orange} /></>],
  ["ArcGIS", <><path d="M7 1.500h10.500v10M1.500 11v6h9" stroke={blue} fill="none" /><path d="M17 2.500c-4 1-3 4-6 5s-3 5-7 6v3.500h6c1-5 3-4 4-8s3-3 3-6.500z" fill={sky} stroke={blue} /><path d="M3 0c4 0 4 4 2 6l-2 3-2-3C-1 4-1 0 3 0z" fill={orange} /><circle cx="3" cy="3" r="1" fill="#fff" /><circle cx="15.500" cy="15.500" r="2.500" fill={orange} /></>],
  ["Power Apps", <g stroke="#9b3fa8"><path d="M6 1h6l5 5v6l-5 5H6l-5-5V6z" fill="#f6e6f8" stroke="none" /><path d="M9 5l4-4 4 4v4l-4 4-4-4-4 4-4-4V5M9 5L5 1 1 5M9 5l4 4-4 4-4-4zM1 9v3l5 5 3-4 3 4 5-5V9" /></g>],
  ["Power Automate", <g stroke="#2a88d8"><path d="M1 2h10l6 7-6 7H1l6-7z" fill="#dcecfa" /><path d="M5 2l6 7-6 7M7 9h4M1 2l8 7" /></g>],
  ["Więcej", <path d="M2 8h2v2H2zM8 8h2v2H8zM14 8h2v2h-2z" fill={dark} />],
];
const extraVisuals: [string, React.ReactNode][] = [
  ["Globus", <><circle cx="9" cy="8" r="6" fill="#fff" stroke={dark} strokeWidth="1.500" /><path d="M5 5l5-2 3 4-3 5-2-3-3 1z" fill="#3d9a55" /><path d="M12 1c4 3 4 12-3 14-2 1-5 0-6-1M9 15v2M3 17.500h12" stroke={dark} /></>],
  ["Kartogram", <><path d="M1 2h6l2 3 4-3h4v9l-5 5H6L1 11z" fill={sky} stroke={blue} /><path d="M9 5l4-3h4v8H9z" fill={grey} stroke="#7a7876" /><path d="M9 5v6l8-1M1 8l8 1" stroke={blue} /></>],
  ["Cele", <><path d="M5 1.500h8v7l-2 3H7l-2-3z" fill="#fff" stroke={dark} /><path d="M5 3H1c0 4 1 5 4 6M13 3h4c0 4-1 5-4 6M9 11v4" stroke={dark} /><path d="M5 1h8v2H5zM5.500 14.500h7v3h-7z" fill={sky} stroke={blue} /></>],
  ["Fragmentator listy", <><path d="M9 1.500h8.500V9M.5 11v6.500H9M4 9.500h2v3H4z" stroke={dark} /><path d="M10 6h5" stroke={dark} />{miniBolt}{miniFunnel}</>],
];
const V = ({ children }: { children: React.ReactNode }) => (
  <svg width="18" height="18" viewBox="0 0 18 18" fill="none" overflow="visible">
    {children}
  </svg>
);

/* ---------- waterfall chart ---------- */
type Kind = "sum" | "up" | "down" | "flat";
const steps: [string, Kind, number, number][] = [
  ["Styczeń", "sum", 0, -64], ["AGD/RTV", "flat", -64, -64], ["Telefony", "flat", -64, -65],
  ["Komputery", "down", -65, -79], ["Akcesoria", "down", -79, -105], ["Luty", "sum", 0, -105],
  ["Akcesoria", "flat", -105, -103], ["Telefony", "down", -103, -139], ["Komputery", "down", -139, -182],
  ["AGD/RTV", "down", -182, -269], ["Marzec", "sum", 0, -269], ["Telefony", "up", -269, -262],
  ["Akcesoria", "down", -262, -271], ["Komputery", "down", -271, -286], ["AGD/RTV", "down", -286, -302],
  ["Kwiecień", "sum", 0, -302], ["Komputery", "up", -302, -205], ["Akcesoria", "down", -205, -217],
  ["Telefony", "down", -217, -255], ["AGD/RTV", "down", -255, -302], ["Maj", "sum", 0, -302],
  ["AGD/RTV", "up", -302, -132], ["Telefony", "up", -132, -22], ["Akcesoria", "up", -22, 21],
  ["Komputery", "flat", 21, 20], ["Czerwiec", "sum", 0, 20], ["AGD/RTV", "up", 20, 26],
  ["Akcesoria", "down", 26, 20], ["Komputery", "down", 20, -5], ["Telefony", "down", -5, -46],
  ["Lipiec", "sum", 0, -46], ["Komputery", "up", -46, -30], ["Akcesoria", "down", -30, -40],
];
const kindColor: Record<Kind, string> = { sum: "#118dff", up: "#9fd89f", down: "#eeacb2", flat: "#c8c8c8" };
const valueLabels: [string, number, number][] = [
  ["0,00", 1, 60], ["-0,07", 1, 82], ["-0,03", 4, 95], ["0,00", 6, 73], ["-0,04", 7, 107], ["-0,05", 8, 121],
  ["-0,09", 9, 150], ["0,01", 11, 126], ["-0,02", 13, 155], ["0,11", 16, 108], ["-0,01", 17, 133],
  ["-0,04", 18, 145], ["-0,05", 19, 161], ["0,19", 21, 83], ["0,12", 22, 46], ["0,05", 23, 32],
  ["0,01", 26, 31], ["-0,01", 27, 54], ["-0,04", 29, 76], ["0,02", 31, 49],
];
const Waterfall = () => {
  const zero = 48;
  const cx = (i: number) => 64.5 + i * 15.64;
  const vy = (v: number) => Math.round(zero - v / 3);
  return (
    <ChartSvg viewBox="0 1 576 299" role="img" aria-label="Odchylenie od budżetu">
      {["0,0", "-0,2", "-0,4", "-0,6"].map((t, i) => (
        <g key={t}>
          <path d={`M54 ${zero + Math.round(i * 61.4)}.5H575`} stroke="#efefef" />
          <text x="47" y={zero + 4 + Math.round(i * 61.4)} fontSize="10" fill="#605e5c" textAnchor="end">{t} mlnzł</text>
        </g>
      ))}
      {steps.map(([name, kind, a, b], i) => {
        const top = Math.min(vy(a), vy(b));
        return (
          <g key={i}>
            <rect x={cx(i) - 4} y={top} width="8" height={Math.max(1, Math.abs(vy(a) - vy(b)))} fill={kindColor[kind]} />
            {i < steps.length - 1 && <path d={`M${cx(i) - 4} ${vy(b)}.5H${cx(i + 1) + 4}`} stroke="#c8c6c4" />}
            <text transform={`translate(${cx(i) + 3} 237) rotate(-90)`} textAnchor="end" fontSize="10" fill="#605e5c">{name}</text>
          </g>
        );
      })}
      {valueLabels.map(([t, i, y], k) => (
        <text key={k} x={cx(i)} y={y + 3} textAnchor="middle" fontSize="9" fill="#605e5c">{t} mlnzł</text>
      ))}
    </ChartSvg>
  );
};

/* ---------- map ---------- */
const forests: [number, number, number, number][] = [
  [700, 210, 60, 30], [560, 330, 55, 45], [560, 400, 70, 50], [500, 290, 40, 20], [720, 280, 50, 25], [810, 270, 30, 40],
  [450, 470, 60, 25], [560, 450, 30, 20], [740, 400, 60, 20], [830, 350, 20, 30], [790, 200, 40, 18], [640, 250, 30, 20],
  [400, 600, 20, 35], [380, 520, 35, 20], [290, 470, 22, 12], [340, 680, 50, 50], [440, 800, 60, 22], [390, 770, 40, 35],
  [230, 650, 50, 15], [180, 690, 25, 20], [130, 930, 30, 10], [90, 1060, 60, 45], [170, 1130, 90, 30], [70, 960, 20, 20],
  [250, 970, 35, 16], [380, 910, 30, 12], [480, 930, 40, 12], [600, 1000, 30, 25], [660, 1090, 60, 30], [780, 1120, 70, 22],
  [530, 1120, 50, 25], [300, 1110, 30, 16], [560, 700, 30, 20], [600, 620, 30, 12], [480, 660, 20, 16], [800, 780, 22, 16],
  [760, 520, 22, 16], [900, 590, 40, 10], [850, 900, 40, 20], [900, 960, 26, 20], [930, 330, 26, 30], [980, 300, 20, 20],
  [1040, 330, 26, 26], [1150, 400, 60, 40], [1240, 380, 70, 35], [1330, 370, 60, 22], [1230, 290, 40, 20], [1150, 240, 50, 20],
  [1380, 220, 70, 30], [1300, 200, 40, 14], [1440, 310, 50, 20], [1510, 370, 40, 50], [1590, 170, 40, 14], [1480, 180, 40, 20],
  [1350, 490, 40, 22], [1400, 600, 50, 14], [1560, 560, 50, 30], [1620, 600, 30, 20], [1720, 400, 50, 20], [1750, 190, 30, 60],
  [1590, 700, 70, 30], [1660, 790, 110, 35], [1740, 720, 50, 30], [1500, 760, 30, 12], [1560, 830, 30, 14], [1250, 560, 30, 14],
  [1060, 650, 30, 10], [1180, 770, 30, 12], [1110, 840, 50, 25], [1130, 900, 60, 20], [1220, 830, 20, 18], [1300, 850, 30, 12],
  [1340, 910, 50, 22], [1290, 960, 30, 10], [1000, 920, 34, 26], [960, 970, 26, 16], [1080, 980, 30, 12], [1190, 1120, 80, 22],
  [1320, 1120, 90, 24], [1440, 1100, 40, 14], [1020, 1110, 50, 26], [1450, 980, 40, 26], [1560, 1060, 40, 22], [1620, 1130, 60, 20],
  [1720, 1050, 36, 20], [60, 340, 16, 20], [100, 230, 20, 8], [210, 450, 12, 20], [150, 420, 20, 8], [1280, 730, 18, 24],
];
const roadsMajor = [
  "M51 275L120 268 195 258 225 285 225 370 290 380 305 400 305 435 285 490 255 530 235 555", "M195 258L195 215 255 155",
  "M75 270L85 320 110 370 110 440", "M51 425L100 450 150 500 190 548 250 560 280 600 270 630",
  "M305 435L340 420 375 415 395 385 415 360 450 340 480 300 510 245 560 232 600 228 650 185 700 175 790 155 860 150 870 180 888 200",
  "M335 297L360 293 400 310 415 360", "M375 400L385 440 430 500 460 545 500 580 500 625 510 720 560 770 577 810 570 860",
  "M120 622L200 630 350 627 440 628 520 635 600 622 673 610 700 628 780 635 830 655 920 668 970 700 1000 715",
  "M51 845L80 800 90 720 140 660 180 625", "M190 548L185 600 160 640",
  "M215 640L250 680 270 720 330 745 400 755 460 790 510 830 570 860 640 890 685 885 740 940 800 990 860 1003 935 1000",
  "M51 785L80 805 130 835 200 875 260 885 270 830 300 760 290 730", "M260 885L200 910 160 930 100 960 60 1010",
  "M270 885L295 930 310 980 350 1040 365 1080 330 1120 300 1145", "M685 870L680 830 660 770 620 730 625 680 650 640 673 610",
  "M806 455L850 410 885 395 893 250 888 200 940 225 1010 250 1030 290 1060 350 1095 365 1110 430 1095 500 1130 590 1183 640",
  "M806 460L770 500 760 560 700 625", "M885 395L900 480 930 530 960 590 990 640 1000 720 1010 800 980 860 940 920 935 1040",
  "M750 840L870 830 900 780 1000 765", "M1000 715L1070 680 1145 655 1183 645 1250 570 1340 490 1400 460 1452 455",
  "M1183 645L1160 700 1170 750 1200 810", "M1165 665L1110 740 1020 805", "M1240 680L1280 740 1320 790 1370 840 1350 900 1345 960 1330 1030 1305 1075",
  "M935 1045L990 1065 1050 1078 1150 1085 1230 1070 1305 1075 1380 1085 1430 1105", "M935 1040L945 1145",
  "M1380 300L1430 240 1460 180 1480 150 1500 132", "M1380 300L1345 330 1330 400 1318 440",
  "M1135 920L1080 1010", "M1165 880L1170 820", "M1080 245L1130 210 1180 160",
];
const roadsMinor = [
  "M100 1030L170 1040 190 1070 280 1060 350 1080", "M365 1080L430 1060 520 1060 540 1020 650 990 665 930 685 885",
  "M440 940L445 970 420 1020 380 1070", "M610 270L640 320 660 380 650 470 680 520 670 590", "M650 458L740 458 806 455",
  "M500 575L580 578 660 595", "M690 628L740 690 785 720 790 800 805 840", "M820 840L840 900 920 950 935 1000",
  "M1452 400L1455 455 1475 490 1450 545 1420 580 1400 690 1365 760 1370 840", "M1210 650L1300 652 1380 675 1430 685 1510 680 1590 710 1630 780 1640 850 1780 845",
  "M1380 840L1410 860 1500 860 1640 850 1700 870 1720 930 1780 990", "M1452 455L1500 390 1550 360 1600 360 1680 330 1720 305 1775 300",
  "M1035 345L1080 360 1115 330 1200 315 1300 310 1380 300", "M1060 180L1140 140 1380 150 1590 150 1775 145", "M1625 640L1700 570 1775 500",
  "M1730 310L1735 380 1720 450 1750 530", "M1380 840L1460 900 1500 1030 1570 1090 1670 1110 1775 1000", "M1025 820L1130 820 1200 815 1340 805",
  "M1140 925L1230 935 1330 920", "M1050 1080L1050 1145", "M950 515L1040 540 1180 520 1290 530", "M1190 600L1200 520 1240 480 1310 450 1300 490",
  "M1520 655L1620 650 1780 662", "M1230 935L1280 1000 1305 1075", "M210 380L195 430 210 560", "M330 850L440 860 510 830", "M51 640L160 640", "M1390 290L1450 330 1450 390",
];
const rivers = [
  "M130 340L160 310 210 285 230 290", "M210 470L215 520 200 590", "M885 470L940 540 980 570 1040 590", "M920 520L960 560 1050 590 1180 640 1220 730 1300 800 1280 860",
  "M170 760L200 830 240 860", "M400 680L480 680", "M320 700L340 780", "M1360 610L1460 630", "M1550 360L1600 390", "M1350 1010L1380 1060", "M70 560L130 500", "M100 1010L130 940",
];
const borders = [
  "M340 340L350 385 361 430 355 465 322 492 322 520 360 545 385 575 375 605 382 630 395 650 398 690 380 725 400 750 397 785 430 810 437 850 427 890 410 925 385 915 370 900 355 885 340 890 350 910 310 930 245 955 200 980 170 1000 120 1010 95 1050 85 1030 68 1030 80 1060 120 1100 115 1145",
  "M410 918L430 920 430 890 460 900 480 930 530 945 555 965 600 962 610 975 585 1005 640 1070 680 1045 665 1010 720 1010 775 1030 765 1055 800 1080 840 1090 850 1110 880 1120 890 1145",
  "M1400 132L1395 165 1405 190 1460 215 1495 250 1500 290 1535 420 1550 490 1550 545 1495 580 1457 640 1485 655 1517 672 1503 745 1515 830 1555 900 1575 920 1555 940 1570 970 1555 1008 1520 1015 1460 1080 1415 1145",
  "M1500 290L1540 292 1570 285 1610 297 1660 270 1665 245 1700 235 1750 210 1778 155", "M1750 210L1770 220 1775 240 1750 235",
  "M1510 770L1550 775 1590 750 1600 718 1680 710 1720 700 1778 708", "M332 288L333 305",
];
const lakes = [
  "M1255 250l15-18 12 20-8 20 20 10-10 25-12-20-20-5z", "M1230 330l20-8 12 20-10 18-18-8z", "M1270 330l18-15 8 20-14 14z", "M1135 270l12 30-6 4z",
  "M1515 205l25-4-10 22z", "M1180 345l14 10-8 8z", "M1520 790l22-8-6 14z", "M1700 1000l14-6-4 14z", "M330 950l60-10-20 20z", "M200 140l16 20-12 12z", "M1330 240l12 16-8 10z",
];
const cities: [string, number, number, number?, number?][] = [
  ["Rostock", 80, 247, 72, 257], ["werin", 51, 345], ["Koszalin", 587, 224, 579, 235], ["Szczecin", 383, 387], ["Gdańsk", 895, 191],
  ["Gorzów", 469, 493], ["Wielkopolski", 469, 533, 460, 543], ["Poczdam", 51, 602, 188, 612], ["agdeburg", 51, 657], ["Zielona", 501, 655],
  ["Góra", 501, 695, 494, 705], ["Bydgoszcz", 816, 450], ["Toruń", 891, 508, 882, 486], ["Poznań", 681, 600], ["Lipsk", 111, 815, 103, 826],
  ["Gera", 72, 907, 65, 917], ["Drezno", 281, 873, 274, 884], ["Liberec", 446, 928, 438, 939], ["Wrocław", 695, 863], ["Opole", 804, 950, 796, 961],
  ["Katowice", 797, 1031], ["Ostrawa", 851, 1113, 843, 1124], ["Pilzno", 234, 1130, 228, 1141], ["Olsztyn", 1124, 312, 1116, 323], ["Grodno", 1545, 335, 1537, 345],
  ["Białystok", 1463, 450], ["Białołęka", 1050, 615, 1184, 626], ["Ursynów", 1195, 687, 1187, 663], ["Brześć", 1526, 662, 1518, 672], ["Radom", 1209, 802, 1201, 813],
  ["Lublin", 1388, 833], ["Kielce", 1143, 909, 1135, 919], ["Kraków", 1058, 1068], ["Rzeszów", 1317, 1071, 1309, 1082], ["Lwów", 1569, 1110],
];
const pins: [number, number][] = [
  [375, 397], [888, 201], [806, 461], [673, 609], [988, 740], [685, 871], [934, 1040], [1452, 459], [1183, 645], [1379, 843], [1049, 1078],
];
const halo = { stroke: "#fff", strokeWidth: 4, strokeLinejoin: "round" as const, paintOrder: "stroke" };
const PolandMap = () => (
  <MapSvg viewBox="51 132 1728 1014" role="img" aria-label="Mapa miast">
    <defs>
      <filter id="rough" x="0" y="0" width="100%" height="100%">
        <feTurbulence type="fractalNoise" baseFrequency="0.022" numOctaves="3" seed="7" result="n" />
        <feDisplacementMap in="SourceGraphic" in2="n" scale="110" xChannelSelector="R" yChannelSelector="G" />
      </filter>
      <filter id="wiggle" x="0" y="0" width="100%" height="100%">
        <feTurbulence type="fractalNoise" baseFrequency="0.05" numOctaves="2" seed="3" result="n" />
        <feDisplacementMap in="SourceGraphic" in2="n" scale="22" xChannelSelector="R" yChannelSelector="G" />
      </filter>
    </defs>
    <rect x="51" y="132" width="1728" height="1014" fill="#cbeed4" />
    <g filter="url(#rough)">
      <rect x="0" y="80" width="1850" height="1120" fill="none" />
      {forests.map(([x, y, rx, ry], i) => (
        <ellipse key={i} cx={x} cy={y} rx={rx} ry={ry} fill="#aee4bd" />
      ))}
    </g>
    <g fill="#f5f0e4">
      <path d="M300 400l18-8 6 22-12 26-20-4z" />
      <path d="M62 735l16 5 8 30-18 14-14-24z" />
      <path d="M168 740l10 4 12 30-14 6z" />
      <path d="M1630 195l16 30-8 30-26 28-24-10 20-40z" />
      <path d="M1575 155l36 2-14 26-18-8z" />
      <path d="M1370 930l12 30 30 0-40 40-6-10z" />
      <path d="M848 172l16 0-4 22-14-6z" />
      <path d="M620 990l22 10 4 40-16 8-10-30z" />
      <path d="M1420 960l20 20 0 28-18-16z" />
      <path d="M430 1040l20 0 0 40-16 10z" />
    </g>
    <g filter="url(#wiggle)" fill="#a6d5ff">
      <path d="M0 60L0 250 70 236 112 218 120 195 112 183 150 175 170 190 205 172 215 150 240 138 262 152 262 175 245 195 218 215 250 222 264 238 252 258 285 285 330 294 400 302 470 264 540 228 600 205 640 165 700 142 800 126 800 60z" />
      <path d="M860 60L875 160 905 192 930 200 960 212 985 236 1012 212 1034 190 1105 160 1140 120 1140 60z" />
      <path d="M300 300L330 310 385 305 388 355 368 332 330 330z" />
      {lakes.map((d) => <path key={d} d={d} />)}
    </g>
    <path d="M114 184l30-4 18 14-30 20-16-6z" fill="#cbeed4" />
    <path d="M240 155l18-4 4 14-16 10z" fill="#cbeed4" />
    <g filter="url(#wiggle)" fill="none" strokeLinejoin="round">
      <rect x="0" y="80" width="1850" height="1120" />
      <g stroke="#a6d5ff" strokeWidth="4">{rivers.map((d) => <path key={d} d={d} />)}</g>
      <g stroke="#fac39b" strokeWidth="4">{roadsMinor.map((d) => <path key={d} d={d} />)}</g>
      <g stroke="#faa56e" strokeWidth="4.500">{roadsMajor.map((d) => <path key={d} d={d} />)}</g>
      <g stroke="#93797a" strokeWidth="4.500">{borders.map((d) => <path key={d} d={d} />)}</g>
    </g>
    <path d="M1030 182L1140 198 1240 206 1410 198" fill="none" stroke="#93797a" strokeWidth="5" />
    <g fontSize="32" fill="#44484b">
      {cities.map(([name, x, y, dx, dy]) => (
        <g key={name}>
          {dx !== undefined && <circle cx={dx} cy={dy} r="4" fill="#44484b" stroke="#fff" strokeWidth="1.500" />}
          <text x={x} y={y} style={halo}>{name}</text>
        </g>
      ))}
    </g>
    <g fontSize="39" fill="#44484b">
      {([["Berlin", 243, 571, 232, 583], ["Praga", 370, 1061, 360, 1074], ["Warszawa", 1196, 632, 1184, 626]] as [string, number, number, number, number][]).map(([n, x, y, dx, dy]) => (
        <g key={n}>
          <circle cx={dx} cy={dy} r="4" />
          <text x={x} y={y} style={halo}>{n}</text>
        </g>
      ))}
    </g>
    <g fontSize="36" fill="#a07f82" letterSpacing="4">
      <text x="912" y="730" style={halo}>POLSKA</text>
      <text x="419" y="1164" style={halo}>CZECHY</text>
    </g>
    {pins.map(([x, y]) => <circle key={x} cx={x} cy={y} r="13.500" fill="#118dff" stroke="#0b62b5" strokeWidth="2" />)}
    <path d="M75 1107h15v15H75z" fill="#f25022" />
    <path d="M92 1107h15v15H92z" fill="#7fba00" />
    <path d="M75 1123h15v15H75z" fill="#00a4ef" />
    <path d="M92 1123h15v15H92z" fill="#ffb900" />
    <g fontFamily="Open Sans" fill="#5e5e5e">
      <text x="113" y="1132" fontSize="25">Microsoft Azure</text>
      <text x="1392" y="1130" fontSize="19" fill="#252423">©2026 TomTom</text>
      <text x="1547" y="1130" fontSize="19" fill="#252423">©2026 OSM</text>
      <text x="1669" y="1130" fontSize="19" fill="#252423">Feedback</text>
    </g>
    <path d="M1668 1138h87" stroke="#252423" strokeWidth="2.500" />
  </MapSvg>
);

/* ---------- data ---------- */
type Btn = { id: string; w: number; lines: string[]; menu?: boolean; off?: boolean };
const groups: { name: string; items: Btn[] }[] = [
  { name: "Dane", items: [
    { id: "getData", w: 40, lines: ["Pobierz", "dane"], menu: true },
    { id: "excel", w: 106, lines: ["Skoroszyt programu", "Excel"] },
    { id: "onelake", w: 76, lines: ["Katalog usługi", "OneLake"], menu: true },
    { id: "sql", w: 36, lines: ["SQL", "Server"] },
    { id: "enter", w: 58, lines: ["Wprowadź", "dane"] },
    { id: "dataverse", w: 51, lines: ["Dataverse"] },
    { id: "recent", w: 45, lines: ["Ostatnie", "źródła"], menu: true },
  ] },
  { name: "Zapytania", items: [
    { id: "transform", w: 58, lines: ["Przekształć", "dane"], menu: true },
    { id: "refresh", w: 44, lines: ["Odśwież", ""], menu: true },
  ] },
  { name: "Wstaw", items: [
    { id: "newVisual", w: 77, lines: ["Nowy element", "wizualny"] },
    { id: "textBox", w: 48, lines: ["Pole", "tekstowe"] },
    { id: "moreVisuals", w: 70, lines: ["Więcej", "wizualizacji"], menu: true },
  ] },
  { name: "Obliczenia", items: [
    { id: "calc", w: 88, lines: ["Nowe obliczenie", "wizualne"], menu: true },
    { id: "measure", w: 35, lines: ["Nowa", "miara"] },
    { id: "quick", w: 37, lines: ["Szybka", "miara"] },
  ] },
  { name: "Poufność", items: [{ id: "sensitivity", w: 48, lines: ["Poufność", ""], menu: true, off: true }] },
  { name: "Udostępnij", items: [{ id: "publish", w: 44, lines: ["Publikuj"] }] },
  { name: "Copilot", items: [
    { id: "prep", w: 150, lines: ["Przygotuj dane dla sztucznej", "inteligencji"] },
    { id: "copilot", w: 39, lines: ["Copilot"] },
  ] },
];
const tabs: [string, number][] = [
  ["Plik", 65], ["Narzędzia główne", 145], ["Wstaw", 73], ["Modelowanie", 116], ["Widok", 72],
  ["Optymalizowanie", 140], ["Pomoc", 74], ["Narzędzia zewnętrzne", 168],
];
const wells = ["Szerokość geograficzna", "Długość geograficzna", "Legenda", "Rozmiar", "Etykietki", "Identyfikator ścieżki", "Kolejność punktów", "Drąż wskroś"];
const fields: [string, string?][] = [
  ["LiczbaPracowni...", "sum"], ["Manager"], ["Miasto", "globe"], ["Nazwa"], ["Ocena Marzy", "fx"], ["OtwartyOd"],
  ["Powierzchnia_m2", "sum"], ["Region"], ["Segment Sklepu", "fx"], ["SklepID"], ["Typ"], ["Wojewodztwo"],
];

const TableIcon = ({ mark }: { mark?: string }) => (
  <svg width="13" height="13" viewBox="0 0 13 13" fill="none" stroke={ink} overflow="visible">
    <rect x=".5" y=".5" width="11.500" height="11.500" rx="2" />
    <path d="M.5 4.500H12M.5 8.500H12M4.500 .5V12M8.500 .5V12" />
    {mark === "calc" && <path d="M7.500 6.500h6v7h-6zM7.500 9h6M7.500 11h6M9.500 9v4M11.500 9v4" fill={pane} />}
    {mark === "check" && (
      <g stroke="none">
        <circle cx="12" cy="11" r="6" fill={green} />
        <path d="M9.500 11l2 2 3-3.500" stroke="#fff" strokeWidth="1.300" />
      </g>
    )}
  </svg>
);
const FieldGlyph = ({ kind }: { kind?: string }) => (
  <svg width="14" height="14" viewBox="0 0 14 14" fill="none" stroke={ink} overflow="visible">
    {kind === "sum" && <path d="M11 3V1.500H2L7 7l-5 5.500h9.500V11" />}
    {kind === "globe" && (
      <g>
        <circle cx="7" cy="7" r="5.500" />
        <ellipse cx="7" cy="7" rx="2.500" ry="5.500" />
        <path d="M2 5h10M2 9h10" />
      </g>
    )}
    {kind === "fx" && (
      <g>
        <path d="M4 12.500H1.500v-11h9V5M4 1.500v11M7 1.500v3" />
        <path d="M10 4C8 3 7.500 5 7 8s-1 5-2.500 4.500M5.500 7.500h4" strokeWidth="1.200" />
        <path d="M9 9l4 4.500M13 9l-4 4.500" strokeWidth="1.200" />
      </g>
    )}
  </svg>
);

const RailIcon = ({ kind }: { kind: string }) => (
  <svg width="20" height="20" viewBox="0 0 20 20" fill="none" stroke={kind === "report" ? "#111" : "#6e6c6a"} overflow="visible">
    {kind === "report" && <path d="M4 3v13.500h14M6.500 6.500H9V14H6.500zM10.500 9H13v5h-2.500zM14.500 4.500H17V14h-2.500z" strokeWidth="1.200" />}
    {kind === "table" && <path d="M2.500 2.500h16v14h-16zM2.500 5.500h16M2.500 9.500h16M2.500 13h16M8 5.500v11M13 5.500v11" />}
    {kind === "model" && <path d="M1.500 6.500h8v8h-8zM1.500 9.500h8M11.500 1.500h7v7h-7zM11.500 4h7M11.500 11.500h7v7h-7zM11.500 14h7M6 6.500V3h5.500M6 14.500V17h5.500" />}
    {(kind === "DAX" || kind === "TMDL") && <path d="M5.500 11V2.500l1-1h6l4 4V11M12 1.500V6h4.500" />}
    {kind === "DAX" && <path d="M18 6v8c-1 2-2 2-3 2" />}
    {(kind === "DAX" || kind === "TMDL") && (
      <text x={kind === "DAX" ? 8 : 10} y="17" textAnchor="middle" fontSize="7" fontWeight="700" fill="#6e6c6a" stroke="none">{kind}</text>
    )}
  </svg>
);

const logoDots = () => {
  const ring = (rad: number, r: number, off: number, fill: string) =>
    Array.from({ length: 6 }, (_, i) => {
      const a = ((i * 60 + off) * Math.PI) / 180;
      return <circle key={`${rad}-${i}`} cx={21 + rad * Math.sin(a)} cy={28 - rad * Math.cos(a)} r={r} fill={fill} />;
    });
  return [ring(20, 3.6, 0, "#ee1c25"), ring(16.6, 2.4, 30, "#ee1c25"), ring(12.7, 2.3, 0, "#636466"), ring(10.5, 1.5, 30, "#636466")];
};

export default function App() {
  return (
    <Shell>
      <Global />
      <TitleBar>
        <TitleButton aria-label="Zapisz">
          <svg width="17" height="17" viewBox="0 0 17 17" fill="none" stroke="#fff"><path d="M1.500 1.500h14v14h-12l-2-2zM4.500 1.500v6h8v-6M5.500 15.500v-5h6v5" /></svg>
        </TitleButton>
        <TitleButton aria-label="Cofnij">
          <svg width="16" height="17" viewBox="0 0 16 17" fill="none" stroke="#fff"><path d="M1.500 1v6h6M1.500 7C5 1 10 1 12.500 4s1 6-1 8l-5 4" /></svg>
        </TitleButton>
        <TitleButton aria-label="Ponów" $dim>
          <svg width="16" height="17" viewBox="0 0 16 17" fill="none" stroke="#fff"><path d="M14.500 1v6h-6M14.500 7C11 1 6 1 3.500 4s-1 6 1 8l5 4" /></svg>
        </TitleButton>
        <FileName>
          nordvella_09_start • Czas ostatniego zapisu: 23.09.2026 o 17:54
          <svg width="9" height="6" viewBox="0 0 9 6"><path d="M0 0h9L4.500 5z" fill="#fff" /></svg>
        </FileName>
        <WindowControls>
          {[["Minimalizuj", "M3 8.500h11"], ["Maksymalizuj", "M3.500 3.500h10v10h-10z"], ["Zamknij", "M3 3l10 10M13 3L3 13"]].map(([n, d]) => (
            <TitleButton key={n} aria-label={n}>
              <svg width="16" height="16" viewBox="0 0 16 16" fill="none" stroke="#fff"><path d={d} /></svg>
            </TitleButton>
          ))}
        </WindowControls>
      </TitleBar>

      <Ribbon>
        <TabRow>
          {tabs.map(([name, w], i) => (
            <RibbonTab key={name} $w={w} $active={i === 1}><span>{name}</span></RibbonTab>
          ))}
          <RibbonTab $w={74} $context><span>Format</span></RibbonTab>
          <RibbonTab $w={261} $context><span>Dane/przechodzenie do szczegółów</span></RibbonTab>
          <ShareButton>
            <svg width="15" height="15" viewBox="0 0 15 15" fill="none" stroke="#fff" strokeWidth="1.200"><path d="M1.500 4v9.500h11V10M9 1l5 4.500L9 10V7.500c-3 0-4 1-5 3 0-4 2-6.500 5-7z" /></svg>
            Udostępnij
            <Chevron size={9} color="#fff" w={1.2} />
          </ShareButton>
        </TabRow>
        <Groups>
          <Group>
            <GroupItems>
              <BigButton $w={38} $off>{I.paste}<ButtonLine>Wklej</ButtonLine></BigButton>
              <SmallButtons>
                <SmallButton>
                  <svg width="16" height="16" viewBox="0 0 16 16" fill="none" stroke={dark}><path d="M4 0l5 11M11 0L6 11" strokeWidth="1.300" /><circle cx="5" cy="13" r="2" stroke={blue} strokeWidth="1.300" /><circle cx="10.500" cy="13" r="2" stroke={blue} strokeWidth="1.300" /></svg>
                  Wytnij
                </SmallButton>
                <SmallButton>
                  <svg width="16" height="16" viewBox="0 0 16 16" fill="none" stroke={dark}><path d="M4 13.500H.5v-13h6l2 2M5.500 3.500h6l4 4v8h-10zM11.500 3.500v4h4M8 10.500h5M8 12.500h5" /></svg>
                  Kopiuj
                </SmallButton>
                <SmallButton>
                  <svg width="16" height="16" viewBox="0 0 16 16" fill="none"><path d="M1 7l5-2 5 5-3 5z" fill="#f9d2a0" stroke={orange} /><path d="M5 5l6 6 2-2-2-2 4-5-1.500-1.500L9 5 7 3z" fill="#fff" stroke={dark} /></svg>
                  Malarz formatów
                </SmallButton>
              </SmallButtons>
            </GroupItems>
            <GroupLabel>Schowek</GroupLabel>
          </Group>
          {groups.map((g) => (
            <Group key={g.name}>
              <GroupItems>
                {g.items.map((b) => (
                  <BigButton key={b.id} $w={b.w} $off={b.off}>
                    {I[b.id]}
                    {b.lines.map((t, i) => (
                      <ButtonLine key={i}>
                        {t}
                        {b.menu && i === b.lines.length - 1 && <Chevron color={b.off ? "#bdbbb9" : dark} />}
                      </ButtonLine>
                    ))}
                  </BigButton>
                ))}
              </GroupItems>
              <GroupLabel>{g.name}</GroupLabel>
            </Group>
          ))}
          <CollapseButton aria-label="Zwiń wstążkę"><Chevron dir="up" size={10} w={1.8} /></CollapseButton>
        </Groups>
      </Ribbon>

      <Main>
        <Rail>
          {["report", "table", "model", "DAX", "TMDL"].map((k, i) => (
            <RailButton key={k} $active={i === 0} aria-label={k}><RailIcon kind={k} /></RailButton>
          ))}
        </Rail>
        <Center>
          <CenterTop>
            <Canvas>
              <Page>
                <Slicer>
                  <SlicerTitle>Rok</SlicerTitle>
                  {["2022", "2023", "2024", "2025", "2026"].map((y) => (
                    <SlicerItem key={y}><SlicerBox type="checkbox" defaultChecked={y === "2025"} />{y}</SlicerItem>
                  ))}
                </Slicer>
                <Card>
                  <CardTitle>Odchylenie od budżetu</CardTitle>
                  <CardSub>wg MiesiacNazwa i Kategoria</CardSub>
                  <Waterfall />
                  <ScrollTrack><ScrollThumb /></ScrollTrack>
                  <Legend>
                    <LegendItem $color="#9fd89f">Zwiększ</LegendItem>
                    <LegendItem $color="#eeacb2">Zmniejsz</LegendItem>
                    <LegendItem $color="#118dff">Suma</LegendItem>
                    <LegendItem $color="#ffcbad">Inne</LegendItem>
                  </Legend>
                </Card>
                <Card $selected>
                  <CardTitle>Miasto</CardTitle>
                  <PolandMap />
                  {(["top", "mid", "bottom"] as const).flatMap((v) =>
                    (["left", "mid", "right"] as const)
                      .filter((h) => v !== "mid" || h !== "mid")
                      .map((h) => <Handle key={v + h} $v={v} $h={h} />)
                  )}
                  <VisualTools>
                    <ToolButton aria-label="Filtry wizualizacji"><svg width="17" height="15" viewBox="0 0 17 15" fill="none" stroke="#605e5c"><path d="M.5 .5h16L10 8v6.500L7 12V8z" /></svg></ToolButton>
                    <ToolButton aria-label="Tryb koncentracji uwagi"><svg width="15" height="13" viewBox="0 0 15 13" fill="none" stroke="#605e5c"><path d="M7 1.500H.5v11h13V7M.5 6.500h6v6M9 .5h5.500V5M14.500 .5L8 6.500" /></svg></ToolButton>
                    <ToolButton aria-label="Więcej opcji"><svg width="16" height="4" viewBox="0 0 16 4" fill="#605e5c"><path d="M0 1h3v2H0zM6.500 1h3v2h-3zM13 1h3v2h-3z" /></svg></ToolButton>
                  </VisualTools>
                </Card>
              </Page>
            </Canvas>
            <Filters>
              <DoubleChevron left />
              <FilterLabel>
                <svg width="13" height="12" viewBox="0 0 13 12" fill="none" stroke={ink} strokeWidth="1.200"><path d="M12 .5v11L6.500 7.500H1l1-3h4.500z" /></svg>
                Filtry
              </FilterLabel>
            </Filters>
          </CenterTop>
          <PageBar>
            <ViewButton $active aria-label="Układ pulpitu">
              <svg width="20" height="15" viewBox="0 0 20 15" fill="none" stroke="#484644"><path d="M1 2.500h18v9H1z" strokeWidth="1.500" /><path d="M10 11v3M6 14.500h8" /></svg>
            </ViewButton>
            <ViewButton aria-label="Układ mobilny">
              <svg width="14" height="21" viewBox="0 0 14 21" fill="none" stroke="#484644"><rect x="1" y="1" width="12" height="19" rx="1" strokeWidth="1.500" /><path d="M6 17h2" strokeWidth="1.500" /></svg>
            </ViewButton>
            <PageArrows>
              <svg width="6" height="9" viewBox="0 0 6 9"><path d="M5 0v9L0 4.500z" fill="#bebbb8" /></svg>
              <svg width="6" height="9" viewBox="0 0 6 9"><path d="M1 0v9l5-4.500z" fill="#bebbb8" /></svg>
            </PageArrows>
            <PageTab>Strona 1</PageTab>
            <PageTab $active>Strona 5</PageTab>
            <AddPage aria-label="Nowa strona"><svg width="11" height="11" viewBox="0 0 11 11" stroke="#fff" strokeWidth="3"><path d="M5.500 0v11M0 5.500h11" /></svg></AddPage>
          </PageBar>
        </Center>

        <Pane $w={181}>
          <PaneHead><PaneTitle>Wizualizacje</PaneTitle><DoubleChevron /></PaneHead>
          <SubTitle>Utwórz element wizualny</SubTitle>
          <ModeRow>
            <ModeButton $active aria-label="Kompiluj">
              <svg width="24" height="24" viewBox="0 0 24 24"><path d="M0 0h20v1H0z" fill={ink} /><path d="M.5 5.500h23v6H.5zM.5 16.500h23v6H.5z" fill={green} stroke={ink} strokeDasharray="2 1" /></svg>
              <Caret width="16" height="9" viewBox="0 0 16 9"><path d="M0 8.500h1L8 1l7 7.500h1" fill={pane} stroke="#979593" /></Caret>
            </ModeButton>
            <ModeButton aria-label="Formatuj">
              <svg width="24" height="24" viewBox="0 0 24 24" fill="none" stroke="#484644"><path d="M2.500 18V9.500h4V1.500h6v12M6.500 9v8M12.500 6.500h5V9M22 8l-9 9 2 2 8-11zM13 17c-3 0-3 5-7 5 4 2 9 1 9-3" strokeWidth="1.400" /></svg>
            </ModeButton>
            <ModeButton aria-label="Analiza">
              <svg width="26" height="26" viewBox="0 0 26 26" fill="none" stroke={dark} strokeWidth="1.300"><circle cx="11" cy="11" r="9.500" /><path d="M1 12l6-5 4 4 8-6M6 18v-5M9 20v-7M12 20v-6M15 19v-9M18 17V9" /><path d="M18 18l7 7" strokeWidth="2.500" /></svg>
            </ModeButton>
          </ModeRow>
          <VisualGrid $top={7}>
            {visuals.map(([n, art]) => <VisualButton key={n} $active={n === "Mapa platformy Azure"} aria-label={n}><V>{art}</V></VisualButton>)}
          </VisualGrid>
          <Dashed />
          <VisualGrid $top={4}>
            {extraVisuals.map(([n, art]) => <VisualButton key={n} aria-label={n}><V>{art}</V></VisualButton>)}
          </VisualGrid>
          <Divider />
          <WellScroll>
            <WellList>
              <Well>
                <WellLabel>Lokalizacja</WellLabel>
                <WellBox $filled>
                  <FieldPill>
                    <span>Miasto</span>
                    <Chevron size={13} w={1} />
                    <svg width="9" height="9" viewBox="0 0 9 9" stroke={dark}><path d="M.5 .5l8 8M8.500 .5l-8 8" /></svg>
                  </FieldPill>
                </WellBox>
              </Well>
              {wells.map((w) => (
                <Well key={w}><WellLabel>{w}</WellLabel><WellBox>Dodaj pola danych tutaj</WellBox></Well>
              ))}
            </WellList>
            <WellBar />
          </WellScroll>
        </Pane>

        <Pane $w={181}>
          <PaneHead><PaneTitle>Dane</PaneTitle><DoubleChevron /></PaneHead>
          <SearchBox>
            <svg width="16" height="16" viewBox="0 0 16 16" fill="none" stroke="#484644"><circle cx="7" cy="7" r="6" /><path d="M11.500 11.500L15 15" /></svg>
            <SearchInput placeholder="Wyszukaj" aria-label="Wyszukaj" />
          </SearchBox>
          <Tree>
            {["DimKalendarz", "DimKategorie", "DimPowodyZwrotow", "DimPracownicy", "DimProdukty", "DimSklepy"].map((t) => (
              <li key={t}>
                <TableRow>
                  <Chevron dir={t === "DimSklepy" ? "down" : "right"} size={14} w={1} />
                  <TableIcon mark={t === "DimSklepy" ? "check" : t === "DimPowodyZwrotow" ? "calc" : undefined} />
                  {t}
                </TableRow>
              </li>
            ))}
            {fields.map(([name, kind]) => (
              <li key={name}>
                <FieldRow>
                  <CheckWrap>
                    <FieldCheck type="checkbox" defaultChecked={name === "Miasto"} />
                    {name === "Miasto" && <svg width="8" height="8" viewBox="0 0 8 8" fill="none" stroke="#fff" strokeWidth="1.300"><path d="M.5 4l2.500 2.500L7.500 1.500" /></svg>}
                  </CheckWrap>
                  <FieldIcon><FieldGlyph kind={kind} /></FieldIcon>
                  {name}
                </FieldRow>
              </li>
            ))}
            {["FaktBudzet", "FaktSatysfakcja", "FaktSprzedaz", "FaktZwroty"].map((t) => (
              <li key={t}><TableRow><Chevron dir="right" size={14} w={1} /><TableIcon />{t}</TableRow></li>
            ))}
          </Tree>
        </Pane>
      </Main>

      <StatusBar>
        Strona 5 z 5
        <ZoomGroup>
          <span>-</span>
          <ZoomSlider type="range" min="10" max="200" defaultValue="76" aria-label="Powiększenie" />
          <span>+</span>
          <ZoomValue>76%</ZoomValue>
          <svg width="16" height="13" viewBox="0 0 16 13" fill="none" stroke="#605e5c"><path d="M.5 .5h15v12H.5z" /><path d="M3 5V3h2M11 3h2v2M13 8v2h-2M5 10H3V8" /></svg>
        </ZoomGroup>
        Jest dostępna aktualizacja (kliknij, aby pobrać)
      </StatusBar>

      <BrandStrip>
        <BrandPill>
          <svg width="184" height="60" viewBox="0 0 184 60" role="img" aria-label="JSystems">
            {logoDots()}
            <g fontFamily="Lato" fontWeight="700" fill="#636466">
              <text x="48" y="42" fontSize="30">J</text>
              <text x="60" y="40" fontSize="34">S</text>
              <text x="78" y="40" fontSize="27">YSTEMS</text>
              <text x="83" y="49" fontSize="6">INSPIRACJA - WIEDZA - REALIZACJA</text>
            </g>
          </svg>
        </BrandPill>
      </BrandStrip>
    </Shell>
  );
}
